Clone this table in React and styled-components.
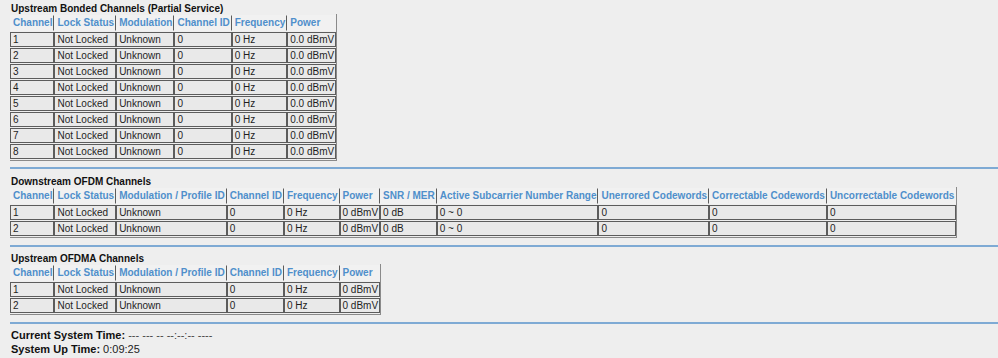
import React from "react";
import styled, { createGlobalStyle } from "styled-components";

const GlobalStyle = createGlobalStyle`
  html, body {
    margin: 0;
    padding: 0;
    background: #eeeeee;
  }
  body {
    font-family: "Liberation Sans", Arial, sans-serif;
    color: #222;
  }
`;

const Page = styled.div`
  padding: 2px 0 0 10px;
  overflow: hidden;
`;

const Section = styled.section`
  display: flex;
  flex-direction: column;
  align-items: flex-start;
`;

const Title = styled.h3`
  margin: ${(p) => p.$top ?? 2}px 0 0 1px;
  font-size: 10px;
  line-height: 10px;
  font-weight: bold;
  color: #111;
`;

const Table = styled.table`
  border-collapse: separate;
  border-spacing: 0 1px;
  border-style: solid;
  border-width: 0 1px 1px 0;
  border-color: #8a8a8a;
  font-size: 10px;
`;

const Th = styled.th`
  background: #f1f1f1;
  color: #4f8fcb;
  font-weight: bold;
  text-align: left;
  white-space: nowrap;
  padding: 0 1px 0 2px;
  line-height: 14px;
  border: 1px solid transparent;
  border-right-color: #5c5c5c;
  &:last-child {
    border-right-color: transparent;
  }
`;

const Td = styled.td`
  background: #e9e9e9;
  color: #1e1e1e;
  white-space: nowrap;
  padding: 0 1px 0 2px;
  line-height: 13px;
  border: 1px solid #5c5c5c;
`;

const Rule = styled.hr`
  border: 0;
  height: 2px;
  background: #7eaad4;
  margin: ${(p) => p.$top}px -10px ${(p) => p.$bottom ?? 5}px 0;
`;

const Footer = styled.div`
  font-size: 11px;
  line-height: 14px;
  padding-left: 1px;
`;

const Label = styled.span`
  font-weight: bold;
  color: #111;
`;

const Value = styled.span`
  color: ${(p) => (p.$muted ? "#444" : "#222")};
`;

function DataTable({ columns, rows }) {
  return (
    <Table>
      <thead>
        <tr>
          {columns.map((c) => (
            <Th key={c}>{c}</Th>
          ))}
        </tr>
      </thead>
      <tbody>
        {rows.map((r, i) => (
          <tr key={i}>
            {r.map((v, j) => (
              <Td key={j}>{v}</Td>
            ))}
          </tr>
        ))}
      </tbody>
    </Table>
  );
}

const bondedCols = ["Channel", "Lock Status", "Modulation", "Channel ID", "Frequency", "Power"];
const bondedRows = Array.from({ length: 8 }, (_, i) => [
  String(i + 1),
  "Not Locked",
  "Unknown",
  "0",
  "0 Hz",
  "0.0 dBmV",
]);

const ofdmCols = [
  "Channel",
  "Lock Status",
  "Modulation / Profile ID",
  "Channel ID",
  "Frequency",
  "Power",
  "SNR / MER",
  "Active Subcarrier Number Range",
  "Unerrored Codewords",
  "Correctable Codewords",
  "Uncorrectable Codewords",
];
const ofdmRows = [1, 2].map((n) => [
  String(n),
  "Not Locked",
  "Unknown",
  "0",
  "0 Hz",
  "0 dBmV",
  "0 dB",
  "0 ~ 0",
  "0",
  "0",
  "0",
]);

const ofdmaCols = ["Channel", "Lock Status", "Modulation / Profile ID", "Channel ID", "Frequency", "Power"];
const ofdmaRows = [1, 2].map((n) => [String(n), "Not Locked", "Unknown", "0", "0 Hz", "0 dBmV"]);

export default function App() {
  return (
    <>
      <GlobalStyle />
      <Page>
        <Section>
          <Title>Upstream Bonded Channels (Partial Service)</Title>
          <DataTable columns={bondedCols} rows={bondedRows} />
        </Section>
        <Rule $top={6} />
        <Section>
          <Title $top={3}>Downstream OFDM Channels</Title>
          <DataTable columns={ofdmCols} rows={ofdmRows} />
        </Section>
        <Rule $top={7} />
        <Section>
          <Title>Upstream OFDMA Channels</Title>
          <DataTable columns={ofdmaCols} rows={ofdmaRows} />
        </Section>
        <Rule $top={7} $bottom={4} />
        <Footer>
          <div>
            <Label>Current System Time: </Label>
            <Value $muted>--- --- -- --:--:-- ----</Value>
          </div>
          <div>
            <Label>System Up Time: </Label>
            <Value>0:09:25</Value>
          </div>
        </Footer>
      </Page>
    </>
  );
}
